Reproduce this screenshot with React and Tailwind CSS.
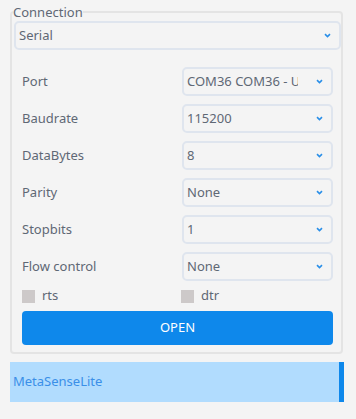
import React, { useState } from "react";

const font = { fontFamily: '"Noto Sans", "Open Sans", sans-serif' };

function Chevron() {
  return (
    <svg width="7" height="5" viewBox="0 0 7 5" className="shrink-0">
      <path d="M1 1.2 L3.5 3.6 L6 1.2" fill="none" stroke="#2a8fe8" strokeWidth="1.6" />
    </svg>
  );
}

function FakeSelect({ value, className }) {
  return (
    <div
      className={
        "flex items-center h-[29px] border-2 border-[#dfe5ee] rounded-[5px] pl-[3px] pr-[8px] text-[13px] text-[#5f6875] " +
        className
      }
    >
      <span className="flex-1 mr-[18px] overflow-hidden whitespace-nowrap">{value}</span>
      <Chevron />
    </div>
  );
}

const rows = [
  { label: "Port", value: "COM36 COM36 - USB-SERIAL CH340" },
  { label: "Baudrate", value: "115200" },
  { label: "DataBytes", value: "8" },
  { label: "Parity", value: "None" },
  { label: "Stopbits", value: "1" },
  { label: "Flow control", value: "None" },
];

export default function App() {
  const [rts, setRts] = useState(false);
  const [dtr, setDtr] = useState(false);

  return (
    <div className="w-[356px] h-[419px] bg-[#f4f4f4] pt-[4px]" style={font}>
      <fieldset className="ml-[10px] w-[333px] border-2 border-[#e4e4e4] rounded-[4px] pb-[7px]">
        <legend className="text-[13px] leading-[16px] text-[#5f6875] ml-[1px] px-0">Connection</legend>
        <FakeSelect value="Serial" className="ml-[2px] w-[327px] mt-[1px]" />
        <div className="flex flex-col gap-[8px] mt-[17px] pl-[10px]">
          {rows.map((r) => (
            <div key={r.label} className="flex items-center">
              <span className="w-[160px] text-[13px] text-[#5f6875]">{r.label}</span>
              <FakeSelect value={r.value} className="w-[151px]" />
            </div>
          ))}
        </div>
        <div className="flex items-center pl-[10px] mt-[8px] h-[14px]">
          <label className="flex items-center w-[159px] cursor-pointer" onClick={() => setRts(!rts)}>
            <span className="w-[13px] h-[13px] bg-[#cdc9c9]" />
            <span className="ml-[7px] text-[13px] text-[#5f6875]">rts</span>
          </label>
          <label className="flex items-center cursor-pointer" onClick={() => setDtr(!dtr)}>
            <span className="w-[13px] h-[13px] bg-[#cdc9c9]" />
            <span className="ml-[7px] text-[13px] text-[#5f6875]">dtr</span>
          </label>
        </div>
        <button className="ml-[10px] mt-[8px] w-[311px] h-[34px] bg-[#0e88eb] rounded-[4px] text-white text-[13px]">
          OPEN
        </button>
      </fieldset>
      <div className="ml-[10px] mt-[8px] w-[334px] h-[40px] flex items-center bg-[#b1dcfe] border-r-[5px] border-[#0e88eb] pl-[3px] text-[13px] text-[#3a8fe8]">
        MetaSenseLite
      </div>
    </div>
  );
}
